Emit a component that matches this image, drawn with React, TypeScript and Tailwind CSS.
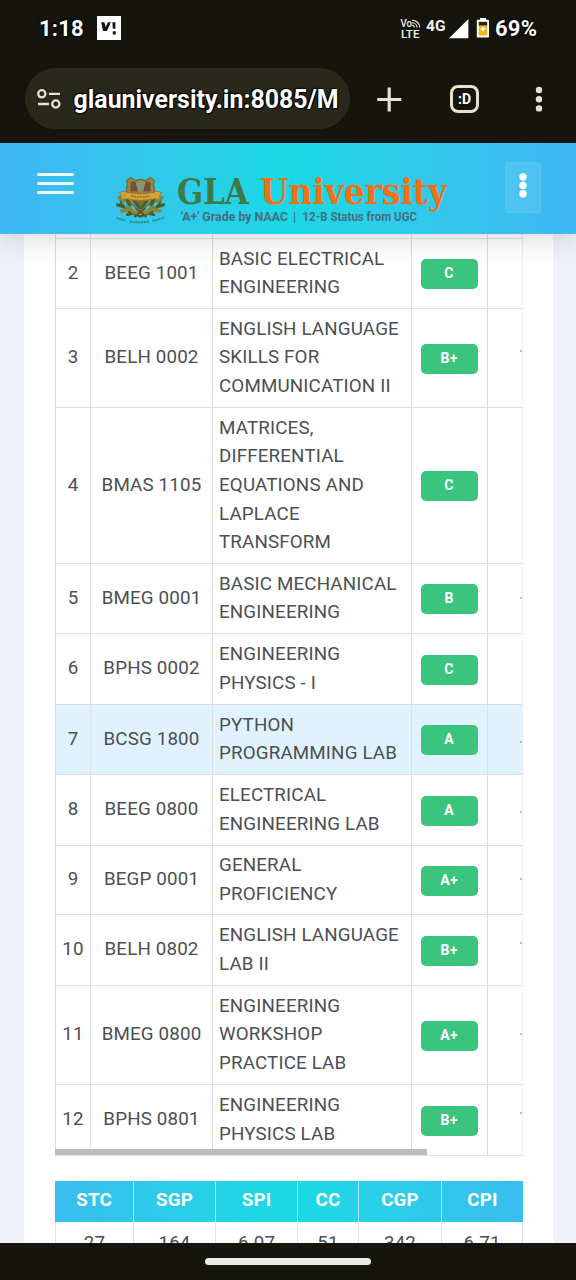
import React from "react";

type Row = { n: number; code: string; lines: string[]; grade: string; h: string; mark: string };

const rows: Row[] = [
  { n: 2, code: "BEEG 1001", lines: ["BASIC ELECTRICAL", "ENGINEERING"], grade: "C", h: "h-[70px]", mark: "" },
  { n: 3, code: "BELH 0002", lines: ["ENGLISH LANGUAGE", "SKILLS FOR", "COMMUNICATION II"], grade: "B+", h: "h-[99px]", mark: "high" },
  { n: 4, code: "BMAS 1105", lines: ["MATRICES,", "DIFFERENTIAL", "EQUATIONS AND", "LAPLACE", "TRANSFORM"], grade: "C", h: "h-[156px]", mark: "" },
  { n: 5, code: "BMEG 0001", lines: ["BASIC MECHANICAL", "ENGINEERING"], grade: "B", h: "h-[70px]", mark: "mid" },
  { n: 6, code: "BPHS 0002", lines: ["ENGINEERING", "PHYSICS - I"], grade: "C", h: "h-[71px]", mark: "" },
  { n: 7, code: "BCSG 1800", lines: ["PYTHON", "PROGRAMMING LAB"], grade: "A", h: "h-[70px]", mark: "low" },
  { n: 8, code: "BEEG 0800", lines: ["ELECTRICAL", "ENGINEERING LAB"], grade: "A", h: "h-[71px]", mark: "low" },
  { n: 9, code: "BEGP 0001", lines: ["GENERAL", "PROFICIENCY"], grade: "A+", h: "h-[69px]", mark: "mid" },
  { n: 10, code: "BELH 0802", lines: ["ENGLISH LANGUAGE", "LAB II"], grade: "B+", h: "h-[71px]", mark: "high" },
  { n: 11, code: "BMEG 0800", lines: ["ENGINEERING", "WORKSHOP", "PRACTICE LAB"], grade: "A+", h: "h-[99px]", mark: "mid" },
  { n: 12, code: "BPHS 0801", lines: ["ENGINEERING", "PHYSICS LAB"], grade: "B+", h: "h-[71px]", mark: "high" },
];

const markClass: Record<string, string> = {
  high: "mb-[14px]",
  mid: "mb-[2px]",
  low: "mt-[4px]",
};

const outline =
  "[text-shadow:0_0_2px_#000,1px_1px_1px_#000,-1px_-1px_1px_#000]";

function StatusBar() {
  return (
    <div className="flex h-[57px] items-center">
      <span className={`ml-[39px] w-[45px] text-[22px] font-bold tracking-[0.2px] text-white ${outline}`}>1:18</span>
      <svg className="ml-[13px] -mt-[2px]" width="24" height="24" viewBox="0 0 24 24">
        <rect width="24" height="24" fill="#fff" />
        <path d="M4.2 6.3h3.2l1.4 4.8 2-4.8h3L9.9 15H6z" fill="#15150e" />
        <path d="M15.4 6.3h3v6.5h-2.6zM15.8 15.2h2.9v3.2h-2.900z" fill="#15150e" />
      </svg>
      <svg className="ml-[279px] overflow-visible" width="22" height="20" viewBox="0 0 22 20">
        <g fill="#f1f1e8" fontFamily="Roboto, sans-serif" fontWeight="500">
          <text x="0.5" y="8.2" fontSize="10.5" textLength="11.5" lengthAdjust="spacingAndGlyphs">Vo</text>
          <text x="1" y="18.6" fontSize="11.5" textLength="18.5" lengthAdjust="spacingAndGlyphs">LTE</text>
        </g>
        <g fill="none" stroke="#f1f1e8" strokeWidth="1.1">
          <path d="M12 1.2c4.5 0 7.7 3 7.7 7.4M12 3.8c2.8 0 5 2 5 4.8M12 6.3c1.3 0 2.3.9 2.3 2.3" />
        </g>
      </svg>
      <span className="ml-[4px] -mt-[3px] w-[20px] whitespace-nowrap text-[15.5px] font-bold text-[#f4f4ec]">4G</span>
      <svg className="ml-[3px]" width="20" height="20" viewBox="0 0 20 20">
        <path d="M19.4 0v19.2H0z" fill="#fff" />
      </svg>
      <svg className="ml-[7px] -mt-[1px]" width="14" height="20" viewBox="0 0 14 20">
        <path d="M4 0h6v1.8h2.2q.8 0 .8.8v16.2q0 .8-.8.8H1.6q-.8 0-.8-.8V2.6q0-.8.8-.8H4z" fill="#fff" />
        <rect x="2.7" y="3.8" width="8.5" height="4" fill="#26261c" />
        <rect x="2.7" y="7.6" width="8.5" height="10" fill="#f5b619" />
        <path d="M7 7.9l1 2.2 2.3.9-2.3.9-1 2.3-1-2.3-2.2-.9 2.2-.9z" fill="#fff" />
      </svg>
      <span className={`ml-[5px] text-[22px] font-bold tracking-[0.2px] text-white ${outline}`}>69%</span>
    </div>
  );
}

function AddressBar() {
  return (
    <div className="flex h-[86px] items-start pt-[11px]">
      <div className="ml-[25px] flex h-[61px] w-[325px] items-center rounded-full bg-[#28281b]">
        <svg className="ml-[12px]" width="24" height="20" viewBox="0 0 24 20" fill="none" stroke="#e4e3d3" strokeWidth="2.3">
          <circle cx="4.8" cy="4.8" r="3.6" />
          <path d="M12 4.8h11M1 15h11" />
          <circle cx="18.8" cy="15" r="3.6" />
        </svg>
        <span className={`ml-[12.5px] mt-[2px] whitespace-nowrap text-[24.9px] font-bold text-white ${outline}`}>
          glauniversity.in:8085/M
        </span>
      </div>
      <svg className="ml-[27px] mt-[19px]" width="25" height="25" viewBox="0 0 25 25" stroke="#e4e3d3" strokeWidth="3.2">
        <path d="M12.2 0.5v24M0.3 12.5h24" />
      </svg>
      <div className="ml-[48px] mt-[17px] flex h-[28px] w-[29px] items-center justify-center rounded-[8px] border-[3px] border-[#e4e3d3] text-[14px] leading-none font-bold text-white">
        :D
      </div>
      <svg className="ml-[56px] mt-[18px]" width="8" height="26" viewBox="0 0 8 26" fill="#e4e3d3">
        <circle cx="4" cy="4" r="3.2" />
        <circle cx="4" cy="13.2" r="3.2" />
        <circle cx="4" cy="22.4" r="3.2" />
      </svg>
    </div>
  );
}

const leaves = [
  [6, 24, 35],
  [5, 30, 15],
  [9, 35, -5],
  [13, 27, 60],
  [14, 33, 30],
  [15, 38, -20],
  [20, 37, 10],
];

function LaurelHalf() {
  return (
    <g>
      <path d="M4 21q2 16 22 20" fill="none" stroke="#4b5a22" strokeWidth="2" />
      {leaves.map(([x, y, angle], i) => (
        <ellipse
          key={i}
          cx={x}
          cy={y}
          rx="4.8"
          ry="1.9"
          transform={`rotate(${angle} ${x} ${y})`}
          fill={i % 2 ? "#47602a" : "#8f8430"}
        />
      ))}
    </g>
  );
}

function Crest() {
  return (
    <g>
      <LaurelHalf />
      <g transform="translate(50 0) scale(-1 1)">
        <LaurelHalf />
      </g>
      <path d="M19 41.5l11-9M31 41.5l-11-9" stroke="#66551f" strokeWidth="2" />
      <path d="M11 5l4-3 5 3q5-2.5 10 0l5-3 4 3q-2 4 0 8 0 15-14 22Q11 28 11 13q2-4 0-8z" fill="#9d8240" stroke="#6d5c2b" strokeWidth="1" />
      <path d="M15 7q4-2 8 0v9h-8zM27 7q4-2 8 0v9h-8z" fill="#6d5638" />
      <path d="M20 7q5-3 10 0l-2.5 9h-5z" fill="#8d9470" />
      <path d="M17 24h16q-2 7-8 10-6-3-8-10z" fill="#3e6140" />
      <path d="M20 25h10l-5 7z" fill="#77702e" />
      <path d="M4 17q4-2.5 8 0 13 3 26 0 4-2.5 8 0l-2 3.5 1 4q-4-2-7-1-13 3-26 0-3-1-7 1l1-4z" fill="#d5a338" stroke="#93701f" strokeWidth="0.7" />
      <path d="M16 20.5q9 2 18 0" fill="none" stroke="#92701f" strokeWidth="1.6" strokeDasharray="2 0.8" />
      <g fill="none" stroke="#2b8f86" strokeWidth="2" strokeDasharray="2.2 0.7">
        <path d="M1 42q4 2.5 9 2.5M14 46q10 1.5 20 0M37 45q7-.5 12-3.5" />
      </g>
    </g>
  );
}

function SiteHeader() {
  return (
    <header className="relative z-10 flex h-[91px] shrink-0 items-start bg-linear-to-r from-[#3fb6f3] via-[#19d9e4] to-[#3fb6f3] shadow-[0_2px_28px_rgba(40,40,60,0.2)]">
      <div className="ml-[37px] mt-[30px] flex w-[37px] flex-col gap-[6px]">
        <span className="h-[3px] rounded-full bg-[#eefcff]" />
        <span className="h-[3px] rounded-full bg-[#eefcff]" />
        <span className="h-[3px] rounded-full bg-[#eefcff]" />
      </div>
      <svg className="ml-[41px] mt-[28px]" width="340" height="60" viewBox="0 0 340 60">
        <g transform="translate(0.5 4.5)">
          <Crest />
        </g>
        <g fontFamily="'DejaVu Serif Condensed', 'DejaVu Serif', serif" fontWeight="700" fontSize="35.5">
          <text x="62" y="32.5" fill="#3f7a46" textLength="71.5" lengthAdjust="spacingAndGlyphs">GLA</text>
          <text x="145" y="32.5" fill="#f27114" textLength="187" lengthAdjust="spacingAndGlyphs">University</text>
        </g>
        <g fontFamily="Roboto, sans-serif" fontWeight="700" fontSize="13.3" fill="#456f7d">
          <text x="66" y="49.5" textLength="107" lengthAdjust="spacingAndGlyphs">{"'A+' Grade by NAAC"}</text>
          <text x="178" y="49.5" fontWeight="400">|</text>
          <text x="187.5" y="49.5" textLength="114.5" lengthAdjust="spacingAndGlyphs">12-B Status from UGC</text>
        </g>
      </svg>
      <div className="ml-[50px] mt-[19px] flex h-[51px] w-[36px] items-start justify-center rounded-[4px] border border-white/5 bg-white/10 pt-[10px]">
        <svg width="8" height="26" viewBox="0 0 8 26" fill="#fff">
          <circle cx="4" cy="4" r="3.7" />
          <circle cx="4" cy="12.4" r="3.7" />
          <circle cx="4" cy="20.8" r="3.7" />
        </svg>
      </div>
    </header>
  );
}

function GradeRow({ row }: { row: Row }) {
  const active = row.n === 7;
  return (
    <div
      className={`grid shrink-0 grid-cols-[35px_122px_199px_76px_34px] border-b border-[#dcdee0] ${row.h} ${
        active ? "bg-[#e0f2fe]" : ""
      }`}
    >
      <div className="flex items-center justify-center border-r border-[#e2e4e6] pb-[1px]">{row.n}</div>
      <div className="flex items-center justify-center border-r border-[#dcdee0] pb-[1px] whitespace-nowrap">{row.code}</div>
      <div className="flex flex-col justify-center border-r border-[#dcdee0] pb-[0.4px] pl-[6px]">
        {row.lines.map((line) => (
          <span key={line} className="whitespace-nowrap">
            {line}
          </span>
        ))}
      </div>
      <div className="flex items-center justify-center border-r border-[#dcdee0]">
        <span className="mt-[1px] mr-[1px] flex h-[30px] w-[57px] items-center justify-center rounded-[5px] bg-[#3bc47d] pb-[2px] text-[14px] leading-none font-bold tracking-[0.2px] text-white">
          {row.grade}
        </span>
      </div>
      <div className="flex items-center justify-end">
        {row.mark !== "" && <span className={`h-[2px] w-[2px] bg-[#bfc3c6] ${markClass[row.mark]}`} />}
      </div>
    </div>
  );
}

const summary = [
  ["STC", "27"],
  ["SGP", "164"],
  ["SPI", "6.07"],
  ["CC", "51"],
  ["CGP", "342"],
  ["CPI", "6.71"],
];

function Summary() {
  return (
    <div className="mt-[26px] w-[468px] shrink-0">
      <div className="grid h-[41px] grid-cols-[79px_82px_82px_61px_83px_81px] bg-linear-to-r from-[#38bdef] via-[#18dae3] to-[#38bdef] text-[18.75px] font-bold text-white">
        {summary.map(([label]) => (
          <div key={label} className="flex items-center justify-center border-r border-white/60 pb-[2px] last:border-r-0">
            {label}
          </div>
        ))}
      </div>
      <div className="grid h-[48px] grid-cols-[78px_82px_82px_61px_83px_81px] border-l border-[#e1e3e5]">
        {summary.map(([label, value]) => (
          <div key={label} className="flex items-start justify-center border-r border-[#e1e3e5] pt-[7px]">
            {value}
          </div>
        ))}
      </div>
    </div>
  );
}

export default function App() {
  return (
    <div className="flex h-[1280px] w-[576px] flex-col overflow-hidden bg-[#15150e] font-['Roboto',sans-serif]">
      <div className="shrink-0">
        <StatusBar />
        <AddressBar />
      </div>
      <div className="flex h-[1100px] shrink-0 flex-col overflow-hidden bg-[#eef2f6]">
        <SiteHeader />
        <main className="mr-[23px] ml-[24px] flex min-h-0 grow flex-col overflow-hidden bg-white pl-[31px] text-[18.75px] leading-[28.7px] tracking-[0.16px] text-[#4b4f54]">
          <div className="flex w-[468px] shrink-0 flex-col border-x border-[#dcdee0] border-r-[#eceef0]">
            <div className="grid h-[5px] grid-cols-[35px_122px_199px_76px_34px] border-b border-[#dcdee0]">
              <span className="border-r border-[#e2e4e6]" />
              <span className="border-r border-[#dcdee0]" />
              <span className="border-r border-[#dcdee0]" />
              <span className="border-r border-[#dcdee0]" />
            </div>
            {rows.map((row) => (
              <GradeRow key={row.n} row={row} />
            ))}
          </div>
          <div className="-mt-[7px] h-[6px] w-[372px] shrink-0 bg-[#bcbcbc]" />
          <Summary />
        </main>
      </div>
      <div className="flex h-[37px] shrink-0 items-center justify-center">
        <div className="h-[7px] w-[166px] rounded-full bg-[#ebebe9]" />
      </div>
    </div>
  );
}
